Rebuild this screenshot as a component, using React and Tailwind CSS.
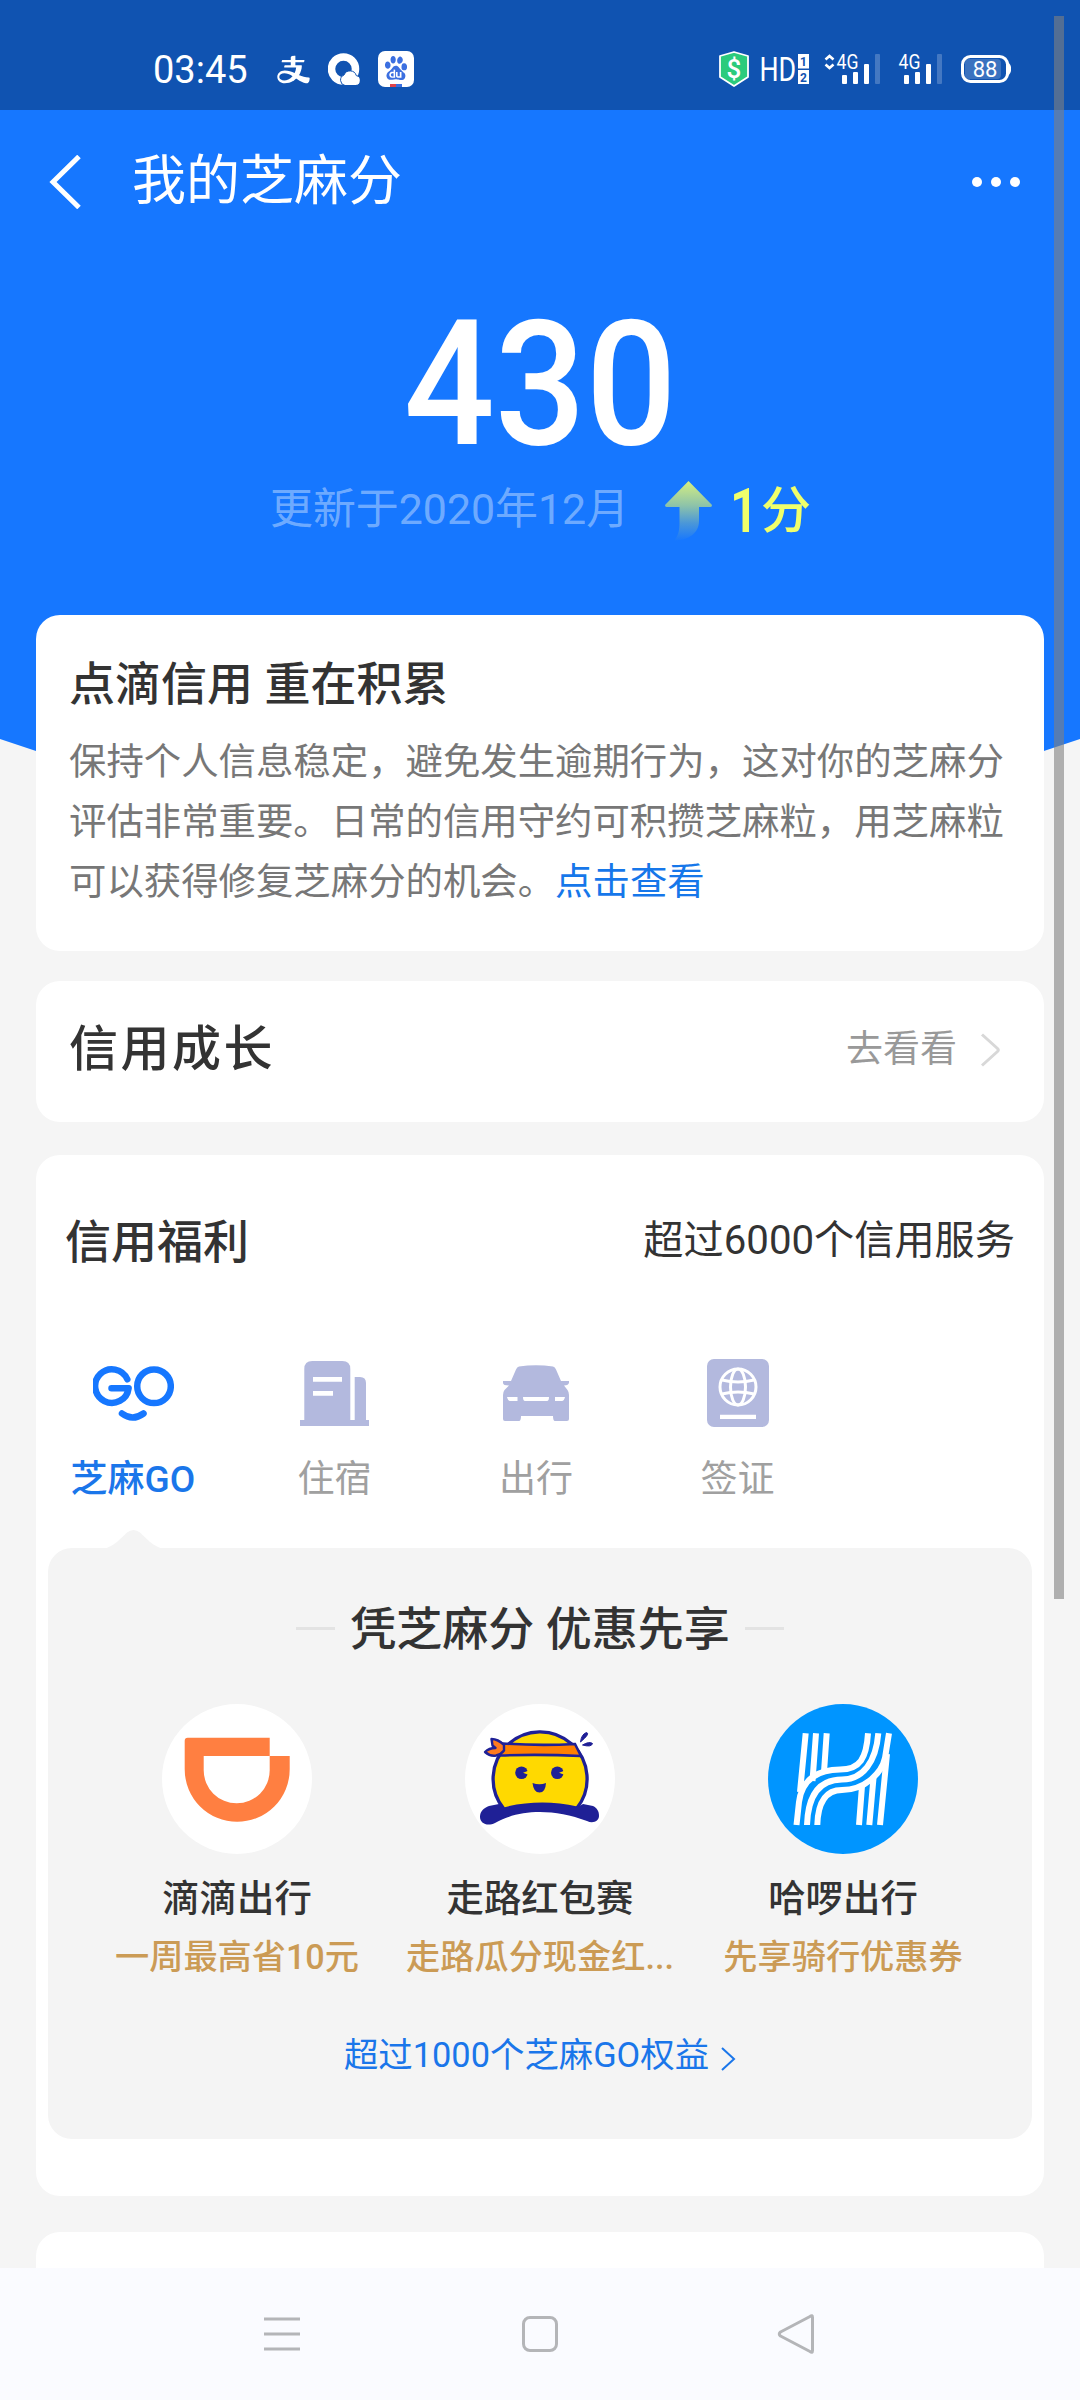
// App.jsx
// Zhima credit score page: status bar, score hero, cards, system nav bar

import React, { useState } from 'react';
import { AiOutlineAlipay } from 'react-icons/ai';
import { SiBaidu } from 'react-icons/si';

const Signal = ({ arrows }) => (
  <svg width={arrows ? 57 : 45} height="38" viewBox={arrows ? '0 -8 57 38' : '12 -8 45 38'} fill="#fff">
    {arrows && (
      <path d="M1.500 5.500 5.500 2l4 3.500M1.500 10.500l4 3.500 4-3.500" fill="none" stroke="#fff" strokeWidth="2.600" />
    )}
    <text transform="translate(12.500 15) scale(0.860 1)" fontSize="20.500" fontFamily="Roboto, sans-serif">
      4G
    </text>
    <rect x="18" y="21" width="5" height="9" rx="1" />
    <rect x="29" y="18" width="5" height="12" rx="1" />
    <rect x="40" y="10" width="5" height="20" rx="1" />
    <rect x="51" y="0" width="5" height="30" rx="1" opacity="0.22" />
  </svg>
);

const StatusBar = () => (
  <div className="h-[110px] shrink-0 bg-[#1053b1] pt-[51px] pl-[153px] pr-[69px] flex items-start text-white">
    <span className="text-[38px] leading-[38px] w-[120px]">03:45</span>
    <AiOutlineAlipay className="w-[37px] h-[37px] ml-[2px]" />
    <svg className="ml-[16px] mt-[2px]" width="32" height="32" viewBox="0 0 32 32">
      <circle cx="15.500" cy="16" r="12" fill="none" stroke="#fff" strokeWidth="7.500" />
      <path
        d="M17 32.500a5.500 5.500 0 0 1-1-10.500 6.500 6.500 0 0 1 12.300.6A5 5 0 0 1 27.500 32.500Z"
        fill="#fff"
        stroke="#1053b1"
        strokeWidth="1"
      />
    </svg>
    <div className="ml-[18px] w-[36px] h-[36px] rounded-[7px] bg-white flex flex-col items-center justify-between overflow-hidden">
      <SiBaidu className="w-[24px] h-[26px] mt-[4px] text-[#3b6fe0]" />
      <div className="flex">
        <span className="w-[6px] h-[3px] bg-[#e0434b]" />
        <span className="w-[6px] h-[3px] bg-[#3b6fe0]" />
      </div>
    </div>

    <div className="ml-auto flex items-start">
      <svg width="30" height="36" viewBox="0 0 30 36">
        <path d="M15 1 29 5v21L15 35 1 26V5Z" fill="#2bcb7c" stroke="#fff" strokeWidth="1.800" strokeLinejoin="round" />
        <text x="15" y="27" textAnchor="middle" fontSize="26" fontWeight="500" fontFamily="Roboto, sans-serif" fill="#fff">
          $
        </text>
      </svg>
      <svg className="ml-[10px] -mt-[5px]" width="51" height="46" viewBox="-2 -8 51 46" fontFamily="Roboto, sans-serif">
        <text transform="translate(-1.500 27) scale(0.800 1)" fontSize="33.500" fill="#fff">
          HD
        </text>
        <rect x="37" y="0" width="11" height="14.500" fill="#fff" />
        <rect x="37" y="16" width="11" height="14" fill="#fff" />
        <text x="42.500" y="11.500" textAnchor="middle" fontSize="12" fontWeight="700" fill="#1053b1">
          1
        </text>
        <text x="42.500" y="27.500" textAnchor="middle" fontSize="12" fontWeight="700" fill="#1053b1">
          2
        </text>
      </svg>
      <div className="ml-[14px] -mt-[5px]">
        <Signal arrows />
      </div>
      <div className="ml-[17px] -mt-[5px]">
        <Signal />
      </div>
      <svg className="ml-[18px] mt-[4px]" width="50" height="28" viewBox="0 0 50 28">
        <rect x="1.500" y="1.500" width="45" height="25" rx="8" fill="none" stroke="#fff" strokeWidth="3" />
        <path d="M47 8.500a8 8 0 0 1 0 11Z" fill="#fff" stroke="#fff" strokeWidth="2" />
        <rect x="4" y="4" width="36" height="20" rx="4" fill="#fff" opacity="0.18" />
        <text x="24" y="21.500" textAnchor="middle" fontSize="22" fontFamily="Roboto, sans-serif" fill="#fff">
          88
        </text>
      </svg>
    </div>
  </div>
);

const Hero = () => (
  <div className="h-[690px] shrink-0 bg-[#1677ff] text-white [clip-path:polygon(0_0,100%_0,100%_629px,897px_690px,183px_690px,0_629px)]">
    <div className="h-[144px] pl-[48px] pr-[60px] flex items-center">
      <svg width="34" height="54" viewBox="0 0 34 54" fill="none">
        <path d="M31 1.500 5 27l26 25.500" stroke="#fff" strokeWidth="5" />
      </svg>
      <h1 className="ml-[50px] text-[54px] leading-none">我的芝麻分</h1>
      <div className="ml-auto flex gap-[9px]">
        <span className="w-[10px] h-[10px] rounded-full bg-white" />
        <span className="w-[10px] h-[10px] rounded-full bg-white" />
        <span className="w-[10px] h-[10px] rounded-full bg-white" />
      </div>
    </div>
    <div className="mt-[44px] h-[174px] flex justify-center">
      <span className="text-[174px] leading-[174px] font-medium scale-x-[0.92]">430</span>
    </div>
    <div className="mt-[9px] h-[60px] pl-[270px] flex items-center">
      <span className="w-[395px] pb-[4px] text-[42.900px] leading-none text-white/40 whitespace-nowrap">更新于2020年12月</span>
      <svg width="47" height="60" viewBox="0 0 47 60">
        <defs>
          <linearGradient id="rise" x1="0" y1="0" x2="0" y2="1">
            <stop offset="0" stopColor="#d6ef80" />
            <stop offset="0.400" stopColor="#8fc4a8" />
            <stop offset="0.700" stopColor="#4b97d8" />
            <stop offset="1" stopColor="#1677ff" />
          </linearGradient>
        </defs>
        <path d="M23.500 0 47 24q0 2-1.500 2H34V40C34 52 24 59 9 60 13 55 14.500 50 14.500 42V26H1.500Q0 26 0 24Z" fill="url(#rise)" />
      </svg>
      <div className="ml-[18px] flex items-center text-[#f0ff6b] font-medium">
        <span className="text-[62px] leading-[60px] w-[31px] scale-x-[0.8] origin-left font-semibold">1</span>
        <span className="text-[50px] leading-[60px]">分</span>
      </div>
    </div>
  </div>
);

const GoIcon = () => (
  <svg className="ml-[2px]" width="81" height="55" viewBox="0 0 81 55" fill="none" stroke="#1677ff" strokeWidth="6.500" strokeLinecap="round" strokeLinejoin="round">
    <path d="M34.300 13.300A16.800 16.800 0 1 0 35.600 22.300H18.500" />
    <circle cx="61" cy="20.300" r="16.800" />
    <path d="M29 47.500Q39.500 55.500 50.500 47.500" />
  </svg>
);

const HotelIcon = () => (
  <svg width="69" height="65" viewBox="0 0 69 65" fill="#b3b9de">
    <path d="M4.300 59V8q0-8 8-8h30q8 0 8 8v51h4.400V16H60q6 0 6 6v37h3v6H0v-6Z" />
    <path d="M13 16h29v4.700H13ZM13 30h20v4.700H13Z" fill="#fff" />
  </svg>
);

const CarIcon = () => (
  <svg width="66" height="57" viewBox="0 0 66 57" fill="#b3b9de">
    <path d="M16 1.500Q33-1 50 1.500q2 .5 3 3L58 16h8v2q-1 2.500-5 2.500L64.500 25Q66 27 66 30v24q0 2-2 2H52q-2 0-2-5H18q0 5-2 5H2q-2 0-2-2V30q0-3 1.500-5L6 20.500Q0 20.500 0 18v-2h8L13 4.500q1-2.500 3-3Z" />
    <path d="M4 32h10.500v4H7q-2 0-3-4ZM20 32h26q0 4-2 4H22q-2 0-2-4ZM52 32h10q-1 4-3 4h-7Z" fill="#fff" />
  </svg>
);

const VisaIcon = () => (
  <svg width="62" height="68" viewBox="0 0 62 68" fill="none">
    <rect width="62" height="68" rx="7" fill="#b3b9de" />
    <g stroke="#fff" strokeWidth="3">
      <circle cx="31" cy="28" r="18" />
      <ellipse cx="31" cy="28" rx="7.500" ry="18" />
      <path d="M15 21Q31 25 47 21M15 35Q31 31 47 35" />
    </g>
    <path d="M13 55.700h36V60H13Z" fill="#fff" />
  </svg>
);

const DidiLogo = () => (
  <svg width="150" height="150" viewBox="0 0 150 150">
    <circle cx="75" cy="75" r="75" fill="#fff" />
    <path
      fillRule="evenodd"
      fill="#ff7f41"
      d="M22.700 36.700a3 3 0 0 1 3-3h82V52h20v13.300a52.500 52.500 0 0 1-105 0ZM41.700 52v14.300a33 33 0 0 0 66 0V52Z"
    />
  </svg>
);

const WalkLogo = () => (
  <svg width="150" height="150" viewBox="0 0 150 150">
    <circle cx="75" cy="75" r="75" fill="#fff" />
    <path d="M39 105A47 47 0 1 1 112 104Q75 96 39 105Z" fill="#ffd900" stroke="#1f2096" strokeWidth="3.300" />
    <path d="M38 39.500Q75 42 110 40l6 12Q75 50 35 51.500Z" fill="#ff8000" stroke="#1f2096" strokeWidth="2.600" />
    <path
      d="M39 41Q33 35 26.500 35l1 6.500 3 2.500Q24 44 20 48q5 4.500 11 3.500 5-1 8-5Z"
      fill="#ff7a1f"
      stroke="#1f2096"
      strokeWidth="2.400"
      strokeLinejoin="round"
    />
    <path
      d="M15 113c0-6 4-9 9-11l10-2 6 5c20-6 52-7 71-1l7-4 10 2c4 2 6 5 6 10 0 5-6 8-12 5-16-6-32-9-47-9-17 0-30 3-45 11-8 4-15 0-15-6Z"
      fill="#1f2096"
    />
    <circle cx="56.500" cy="68.700" r="6.300" fill="#1f2096" />
    <circle cx="92.300" cy="68.700" r="6.300" fill="#1f2096" />
    <path d="m58 68.700 6-2.200v4.400ZM94 68.700l6-2.200v4.400Z" fill="#ffd900" />
    <path d="M67.500 79q7 2.500 13.500 0-.5 9.500-6.500 9.500T67.500 79Z" fill="#1f2096" />
    <path d="M115.500 38q1-8 6-9.500 4 1-6 9.500ZM117.500 41q7-4 10-1.500-1 4-10 1.500Z" fill="#1f2096" stroke="#1f2096" />
  </svg>
);

const HelloLogo = () => (
  <svg width="150" height="150" viewBox="0 0 150 150" fill="none">
    <circle cx="75" cy="75" r="75" fill="#0095ff" />
    <g stroke="#fff" strokeWidth="6">
      <path d="M37.700 29.300 32 88M48 29.300 44.500 77M58.700 29.300 56 68" />
      <path d="M28.500 121 31 98C34 74 52 65.500 72 65.500S98.500 54 100 29.300" />
      <path d="M39 121C40 89 53 75.500 74 75.500S108 58 110.300 29.300" />
      <path d="M49.300 121C50 96 59 86 74 86 98 86 114 68 117 54L121 29.300" />
      <path d="M91 121 94 82M101.300 121 105.500 74M112 121 119 50" />
    </g>
  </svg>
);

const tabs = [
  { id: 'go', label: '芝麻GO', Icon: GoIcon },
  { id: 'hotel', label: '住宿', Icon: HotelIcon },
  { id: 'car', label: '出行', Icon: CarIcon },
  { id: 'visa', label: '签证', Icon: VisaIcon },
];

const benefits = [
  { name: '滴滴出行', desc: '一周最高省10元', Logo: DidiLogo },
  { name: '走路红包赛', desc: '走路瓜分现金红...', Logo: WalkLogo },
  { name: '哈啰出行', desc: '先享骑行优惠券', Logo: HelloLogo },
];

const BenefitCard = () => {
  const [active, setActive] = useState('go');

  return (
    <section className="mt-[33px] h-[1041px] shrink-0 bg-white rounded-[24px] px-[12px]">
      <div className="h-[172px] pl-[17px] pr-[17px] pt-px flex items-center justify-between text-[#333]">
        <h2 className="text-[46px] leading-none font-medium">信用福利</h2>
        <span className="text-[40.200px] leading-none">超过6000个信用服务</span>
      </div>

      <div className="-ml-[16px] h-[221px] flex">
        {tabs.map(({ id, label, Icon }) => (
          <button key={id} onClick={() => setActive(id)} className="w-[201.600px] flex flex-col items-center">
            <span className="mt-[28px] h-[76px] flex items-center justify-center">
              <Icon />
            </span>
            <span
              className={
                active === id
                  ? 'mt-[29px] text-[37px] leading-[40px] font-medium text-[#1a76ea]'
                  : 'mt-[29px] text-[37px] leading-[40px] text-[#a0a0a0]'
              }
            >
              {label}
            </span>
          </button>
        ))}
      </div>

      <div className="relative h-[591px] bg-[#f4f4f4] rounded-[24px]">
        <svg className="absolute left-[55px] -top-[18px]" width="61" height="19" viewBox="0 0 61 19" fill="#f4f4f4">
          <path d="M0 19C12 16 18 8 24 2.500Q30.500-2.500 37 2.500C43 8 49 16 61 19Z" />
        </svg>
        <div className="h-[156px] pt-[5px] flex items-center justify-center gap-[15px]">
          <span className="w-[39px] h-[3px] bg-[#e3e3e3]" />
          <h3 className="pt-px text-[46px] leading-none font-medium text-[#333]">凭芝麻分 优惠先享</h3>
          <span className="w-[39px] h-[3px] bg-[#e3e3e3]" />
        </div>
        <div className="flex justify-center">
          {benefits.map(({ name, desc, Logo }) => (
            <div key={name} className="w-[303px] flex flex-col items-center">
              <Logo />
              <p className="mt-[25px] text-[37.400px] leading-[40px] font-medium text-[#333]">{name}</p>
              <p className="mt-[18px] text-[34.200px] leading-[40px] font-medium text-[#cb9b55] whitespace-nowrap">{desc}</p>
            </div>
          ))}
        </div>
        <div className="mt-[58px] flex items-center justify-center text-[#1a76ea]">
          <span className="text-[34.400px] leading-[40px]">超过1000个芝麻GO权益</span>
          <svg className="ml-[11px] mt-[7px]" width="16" height="24" viewBox="0 0 16 24" fill="none">
            <path d="m2 1 12 11L2 23" stroke="#1a76ea" strokeWidth="2" />
          </svg>
        </div>
      </div>
    </section>
  );
};

const SystemNav = () => (
  <div className="absolute left-0 bottom-0 w-full h-[132px] bg-[#fafbff] flex items-center">
    <svg className="ml-[264px]" width="36" height="34" viewBox="0 0 36 34">
      <path d="M0 2h36M0 17h36M0 32h36" stroke="#b4b5b8" strokeWidth="3" />
    </svg>
    <span className="ml-[222px] w-[36px] h-[36px] rounded-[8px] border-3 border-[#b4b5b8]" />
    <svg className="ml-[219px]" width="38" height="42" viewBox="0 0 38 42" fill="none">
      <path d="M35.500 4.500v33q0 3-2.500 1L3.500 23q-2.500-2 0-4L33 3.500q2.500-2 2.500 1Z" stroke="#b4b5b8" strokeWidth="3" strokeLinejoin="round" />
    </svg>
  </div>
);

const App = () => (
  <div className="relative w-[1080px] h-[2400px] overflow-hidden bg-[#f5f5f5] flex flex-col font-[Roboto,'Noto_Sans_CJK_SC',sans-serif]">
    <StatusBar />
    <Hero />
    <main className="relative -mt-[185px] mx-[36px] flex flex-col">
      <section className="h-[336px] shrink-0 bg-white rounded-[24px] pl-[33px] pt-[43px]">
        <h2 className="text-[46px] leading-[52px] font-medium text-[#333]">点滴信用 重在积累</h2>
        <p className="mt-[22px] w-[945px] text-[37.400px] leading-[60px] text-[#777]">
          保持个人信息稳定，避免发生逾期行为，这对你的芝麻分
          <br />
          评估非常重要。日常的信用守约可积攒芝麻粒，用芝麻粒
          <br />
          可以获得修复芝麻分的机会。
          <a className="text-[#1677ea]">点击查看</a>
        </p>
      </section>

      <section className="mt-[30px] h-[141px] shrink-0 bg-white rounded-[24px] pl-[33px] pr-[43px] pb-[4px] flex items-center">
        <h2 className="text-[49px] leading-none tracking-[2.500px] font-medium text-[#333]">信用成长</h2>
        <span className="ml-auto text-[37px] leading-none text-[#999]">去看看</span>
        <svg className="ml-[23px]" width="21" height="34" viewBox="0 0 21 34" fill="none">
          <path d="m2 1.500 15.500 14q1.500 1.500 0 3L2 32.500" stroke="#d8d8d8" strokeWidth="3" />
        </svg>
      </section>

      <BenefitCard />

      <section className="mt-[36px] h-[100px] shrink-0 bg-white rounded-[24px]" />
    </main>
    <SystemNav />
    <div className="absolute left-[1054px] top-[16px] w-[10px] h-[1583px] bg-[#808080]/60" />
  </div>
);

export default App;
